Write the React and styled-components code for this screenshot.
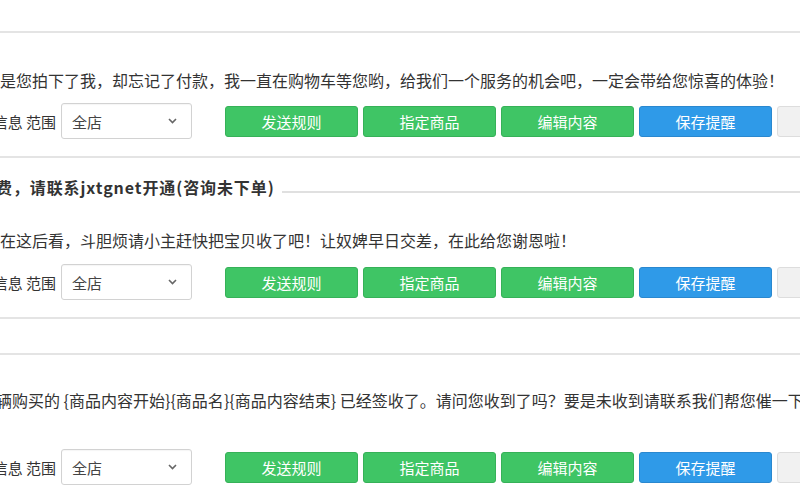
import React from 'react';
import styled, { createGlobalStyle } from 'styled-components';

const GlobalStyle = createGlobalStyle`
  html, body {
    margin: 0;
    padding: 0;
    background: #ffffff;
  }
  body {
    font-family: "Noto Sans CJK SC", "Noto Sans", "Liberation Sans", sans-serif;
    color: #333333;
  }
`;

const Page = styled.div`
  width: 800px;
  height: 500px;
  overflow: hidden;
  display: flex;
  flex-direction: column;
`;

const Divider = styled.div`
  flex: none;
  height: 2px;
  background: #e4e4e4;
  margin-top: ${props => props.top}px;
`;

const Heading = styled.div`
  display: flex;
  align-items: center;
  gap: 7px;
  margin-top: ${props => props.top}px;
  height: 24px;
`;

const HeadingText = styled.span`
  flex: none;
  font-size: 16px;
  font-weight: 700;
  line-height: 24px;
  letter-spacing: 0.9px;
  white-space: nowrap;
  color: #333333;
  margin-left: -4px;
`;

const HeadingRule = styled.div`
  flex: 1;
  height: 2px;
  margin-top: 10px;
  background: #e0e0e0;
`;

const Message = styled.div`
  font-size: 16px;
  line-height: 24px;
  height: 24px;
  white-space: nowrap;
  color: #333333;
  margin-top: ${props => props.top}px;
  margin-left: ${props => props.shift || 0}px;
`;

const Controls = styled.div`
  display: flex;
  align-items: center;
  height: 36px;
  margin-top: ${props => props.top}px;
`;

const LabelBox = styled.div`
  flex: none;
  width: 56px;
  display: flex;
  justify-content: flex-end;
  white-space: nowrap;
  font-size: 15px;
  color: #333333;
`;

const Select = styled.div`
  flex: none;
  box-sizing: border-box;
  width: 131px;
  height: 36px;
  margin-left: 5px;
  padding: 0 14px 0 10px;
  display: flex;
  align-items: center;
  justify-content: space-between;
  border: 1px solid #d2d2d2;
  border-radius: 3px;
  font-size: 15px;
  color: #444444;
  box-shadow: inset 0 1px 1px rgba(0, 0, 0, 0.04);
`;

const Buttons = styled.div`
  display: flex;
  gap: 5px;
  margin-left: 33px;
`;

const palette = {
  green: { bg: '#3fc565', border: '#36b158', color: '#ffffff' },
  blue: { bg: '#2f9ae8', border: '#2a88cf', color: '#ffffff' },
  grey: { bg: '#f1f1f1', border: '#dddddd', color: '#555555' },
};

const Button = styled.div`
  flex: none;
  box-sizing: border-box;
  width: 133px;
  height: 31px;
  display: flex;
  align-items: center;
  justify-content: center;
  border-radius: 3px;
  font-size: 15px;
  background: ${props => palette[props.kind].bg};
  border: 1px solid ${props => palette[props.kind].border};
  color: ${props => palette[props.kind].color};
`;

const Chevron = () => (
  <svg width="9" height="6" viewBox="0 0 9 6">
    <polyline points="1,1 4.5,4.5 8,1" fill="none" stroke="#666" strokeWidth="1.6" />
  </svg>
);

const ControlRow = ({ top }) => (
  <Controls top={top}>
    <LabelBox>提醒信息 范围</LabelBox>
    <Select>
      <span>全店</span>
      <Chevron />
    </Select>
    <Buttons>
      <Button kind="green">发送规则</Button>
      <Button kind="green">指定商品</Button>
      <Button kind="green">编辑内容</Button>
      <Button kind="blue">保存提醒</Button>
      <Button kind="grey">删除提醒</Button>
    </Buttons>
  </Controls>
);

export default function App() {
  return (
    <>
      <GlobalStyle />
      <Page>
        <Divider top={31} />
        <Message top={35}>
          是您拍下了我，却忘记了付款，我一直在购物车等您哟，给我们一个服务的机会吧，一定会带给您惊喜的体验！
        </Message>
        <ControlRow top={11} />
        <Divider top={17} />

        <Heading top={17}>
          <HeadingText>费，请联系jxtgnet开通(咨询未下单)</HeadingText>
          <HeadingRule />
        </Heading>
        <Message top={29}>
          在这后看，斗胆烦请小主赶快把宝贝收了吧！让奴婢早日交差，在此给您谢恩啦！
        </Message>
        <ControlRow top={12} />
        <Divider top={17} />

        <Divider top={34} />
        <Message top={33} shift={-4}>
          辆购买的 {'{'}商品内容开始{'}{'}商品名{'}{'}商品内容结束{'}'} 已经签收了。请问您收到了吗？要是未收到请联系我们帮您催一下
        </Message>
        <ControlRow top={37} />
      </Page>
    </>
  );
}
